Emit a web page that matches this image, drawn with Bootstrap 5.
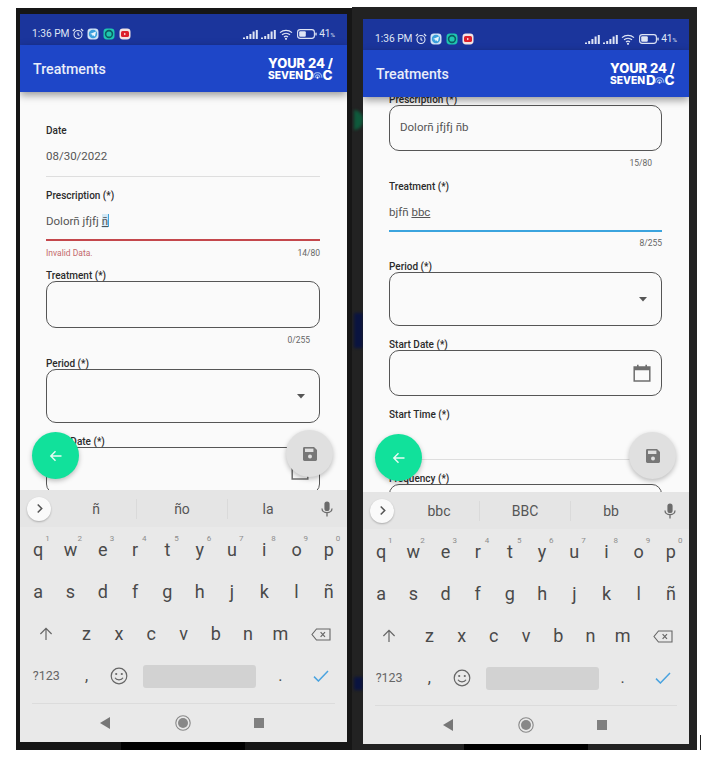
<!DOCTYPE html>
<html lang="en">
<head>
  <meta charset="UTF-8">
  <title>Treatments</title>
  <link href="https://cdn.jsdelivr.net/npm/bootstrap@5.3.3/dist/css/bootstrap.min.css" rel="stylesheet">
  <style>
    body { background: #fff; font-family: Roboto, "Liberation Sans", sans-serif; width: 707px; height: 758px; overflow: hidden; }
    .page-wrap { padding-left: 16px; }
    .frame-a { background: #161616; width: 336px; height: 742px; margin-top: 8px; padding: 6px 5px 8px 4px; }
    .frame-b { background: #222; width: 345px; height: 743px; margin-top: 7px; padding: 12px 8px 6px 11px; }
    .blob { position: absolute; left: 2px; width: 9px; filter: blur(1.5px); }
    .blob-green { top: 103px; height: 20px; background: #0f5a3c; border-radius: 0 10px 10px 0; }
    .blob-navy { top: 306px; height: 35px; background: #0a1440; }
    .blob-navy2 { top: 670px; height: 13px; background: #0a1440; }
    .notch { position: absolute; bottom: 0; height: 8px; width: 124px; background: #000; }
    .frame-a .notch { left: 105px; }
    .frame-b .notch { left: 112px; height: 6px; }
    .stray-line { position: absolute; left: 700px; top: 735px; width: 1px; height: 15px; background: #222; }
    .screen { height: 100%; background: #fafafa; overflow: hidden; }
    .status-row { height: 31px; background: #1b359c; color: #dfe5f5; font-size: 10.2px; padding: 9px 12px 0 12px; }
    .status-row svg { display: block; }
    .bar-row { height: 47px; background: #1e46c8; color: #e9edf9; padding: 2px 13px 0; box-shadow: 0 3px 8px rgba(0,0,0,.4); z-index: 2; }
    .bar-title { font-size: 14.2px; font-weight: 500; }
    .brand-logo { display: block; margin-right: 1px; }
    .brand-logo text { font-family: Inter, Roboto, sans-serif; font-weight: 800; fill: #fff; }
    .content { flex: 1 1 0; min-height: 0; overflow: hidden; padding: 32px 27px 0 26px; }
    .content-scrolled { padding-top: 0; }
    .content-scrolled > div { margin-top: -4px; }
    .fld-label { height: 12px; padding-top: 1px; font-size: 10px; line-height: 12px; font-weight: 500; color: #2b2b2b; }
    .fld-line { height: 41px; padding-top: 2px; font-size: 11.5px; color: #555; border-bottom: 1px solid #dedede; }
    .frame-b .fld-line { height: 40px; }
    .fld-line.is-error { height: 40px; padding-top: 3px; border-bottom: 2px solid #c4474c; }
    .fld-line.is-focus { padding-top: 3px; border-bottom: 2px solid #3ba4de; }
    .fld-box { height: 47px; border: 1px solid #555; border-radius: 10px; font-size: 11.5px; color: #555; padding: 0 10px; }
    .frame-b .fld-box { height: 46px; }
    .fld-box.is-tall, .frame-b .fld-box.is-tall { height: 54px; }
    .fld-help { height: 28px; padding-top: 6px; font-size: 8.5px; line-height: 12px; color: #666; }
    .frame-b .fld-help { padding-top: 5px; }
    .fld-help .err { color: #c4696c; }
    .fld-count { height: 29px; padding: 6px 10px 0 0; font-size: 8.5px; line-height: 12px; color: #666; text-align: right; }
    .gap-12 { height: 12px; }
    .caret-mark { display: inline-block; width: 1px; height: 13px; background: #3ba4de; vertical-align: -2px; }
    .under-sel { background: #d3e9f6; }
    .fab { position: absolute; width: 47px; height: 47px; border-radius: 50%; z-index: 3; }
    .fab-back { left: 12px; bottom: 11px; background: #11e19b; box-shadow: 0 2px 5px rgba(0,0,0,.25); }
    .fab-save { right: 14px; bottom: 13px; background: #e0e0e0; box-shadow: 0 2px 5px rgba(0,0,0,.25); }
    .frame-b .fab-save { right: 13px; }
    .kbd { background: #e9e9e9; color: #4a4a4a; flex: 0 0 auto; height: 252px; z-index: 2; position: relative; }
    .kbd-strip { height: 37px; background: #e5e5e5; font-size: 14px; color: #555; }
    .chev-btn { width: 24px; height: 24px; margin: 0 5px 0 7px; border-radius: 50%; background: #fafafa; box-shadow: 0 1px 2px rgba(0,0,0,.25); }
    .sug { width: 80px; height: 20px; line-height: 20px; text-align: center; }
    .sug-mid { width: 92px; border-left: 1px solid #dadada; border-right: 1px solid #dadada; }
    .mic-cell { width: 38px; }
    .kbd-keys { padding: 2px 2px 0; }
    .key-row { display: grid; grid-template-columns: repeat(20, 1fr); height: 42px; }
    .key-cell { grid-column: span 2; position: relative; font-size: 18px; line-height: 1; }
    .key-wide { grid-column: span 3; }
    .key-space { grid-column: span 8; padding: 0 8px; }
    .space-bar { width: 100%; height: 23px; background: #d2d2d2; border-radius: 3px; }
    .key-num { position: absolute; left: calc(50% + 7px); top: 6px; font-size: 8px; line-height: 8px; color: #8d8d8d; }
    .key-sym { font-size: 12.5px; color: #666; }
    .kbd-nav { height: 39px; margin: 6px 12px 0; border-top: 1px solid #dcdcdc; position: relative; }
    .nav-ico { position: absolute; }
    .nav-tri { left: 68px; top: 13px; }
    .nav-ring { left: 143px; top: 11px; }
    .nav-sq { left: 222px; top: 14px; }
    .sig-gap { margin-left: 3px; }
    .alarm-gap { margin-left: 2px; }
    .app-gap { margin-left: 3px; }
    .batt-gap { margin-left: 4px; }
    .pct-sign { font-size: 6px; }
    .pct-wrap { margin-left: 2px; }
  </style>
</head>
<body>
<svg width="0" height="0" class="position-absolute">
  <symbol id="ico-alarm" viewBox="0 0 12 12"><circle cx="6" cy="6.5" r="4" fill="none" stroke="#dfe5f5" stroke-width="1.1"/><path d="M6 4.4V6.6L7.4 7.4M.8 3 3 1M11.2 3 9 1" fill="none" stroke="#dfe5f5" stroke-width="1.1"/></symbol>
  <symbol id="ico-tele" viewBox="0 0 12 12"><rect x=".5" y=".5" width="11" height="11" rx="3.4" fill="#cfe3f5"/><circle cx="6" cy="6" r="4.2" fill="#3a9fdc"/><path d="M3 6 9 3.6 8 8.6 6 7.2 5.2 8V6.6Z" fill="#eaf5fc"/></symbol>
  <symbol id="ico-teal" viewBox="0 0 12 12"><rect x=".5" y=".5" width="11" height="11" rx="3.4" fill="#1fc7b0"/><circle cx="6" cy="6" r="3.4" fill="none" stroke="#0c5d63" stroke-width="1.6"/></symbol>
  <symbol id="ico-yt" viewBox="0 0 12 12"><rect x=".5" y=".5" width="11" height="11" rx="3.4" fill="#f2e4e4"/><rect x="2" y="3" width="8" height="6" rx="1.6" fill="#dc1f2a"/><path d="M5.2 4.8 7 6 5.2 7.2Z" fill="#fff"/></symbol>
  <symbol id="ico-sig" viewBox="0 0 15 9"><path d="M0 7.5h2V9H0ZM3.2 6h2v3h-2ZM6.4 4h2v5h-2ZM9.6 1.5h2V9h-2ZM12.8 0h2v9h-2Z" fill="#dfe5f5"/></symbol>
  <symbol id="ico-wifi" viewBox="0 0 14 11"><path d="M1 3.6C4.4.6 9.6.6 13 3.6M3 5.8C5.3 3.8 8.7 3.8 11 5.8M5 8C6.2 7 7.8 7 9 8" fill="none" stroke="#dfe5f5" stroke-width="1.2"/><circle cx="7" cy="9.8" r="1.1" fill="#dfe5f5"/></symbol>
  <symbol id="ico-batt" viewBox="0 0 20 10"><rect x=".6" y=".6" width="16.8" height="8.8" rx="2.6" fill="none" stroke="#dfe5f5" stroke-width="1.1"/><rect x="2.2" y="2.2" width="6.6" height="5.6" rx="1" fill="#dfe5f5"/><rect x="18.3" y="3.4" width="1.4" height="3.2" rx=".6" fill="#dfe5f5"/></symbol>
  <symbol id="ico-doc-o" viewBox="0 0 12 11"><path d="M1.2 8.5C1.2 1 10.8 1 10.8 8.5M3.4 8.5C3.4 4.2 8.6 4.2 8.6 8.5" fill="none" stroke="#8fb0ee" stroke-width="1.3"/><circle cx="6" cy="8.4" r="1.2" fill="#fff"/></symbol>
  <symbol id="ico-back" viewBox="0 0 16 16"><path d="M13.5 8H3M7.5 3.2 2.8 8l4.7 4.8" fill="none" stroke="#e9fbf4" stroke-width="1.4"/></symbol>
  <symbol id="ico-save" viewBox="0 0 16 16"><path d="M1 2.4C1 1.6 1.6 1 2.4 1H12L15 4V13.6C15 14.4 14.4 15 13.6 15H2.4C1.6 15 1 14.4 1 13.6Z" fill="#777"/><rect x="3" y="2.6" width="8.4" height="3.4" fill="#e0e0e0"/><circle cx="8" cy="10.6" r="2" fill="#e0e0e0"/></symbol>
  <symbol id="ico-cal" viewBox="0 0 18 18"><path d="M1.2 3H16.8V17H1.2Z" fill="none" stroke="#6e6e6e" stroke-width="1.5"/><path d="M1 3H17V6.2H1ZM4 .8H5.6V3H4ZM12.4 .8H14V3H12.4Z" fill="#6e6e6e"/></symbol>
  <symbol id="ico-caret" viewBox="0 0 8 5"><path d="M0 0H8L4 4.6Z" fill="#555"/></symbol>
  <symbol id="ico-chev" viewBox="0 0 10 10"><path d="M3.4 1.4 7 5 3.4 8.6" fill="none" stroke="#555" stroke-width="1.4"/></symbol>
  <symbol id="ico-mic" viewBox="0 0 12 16"><rect x="3.4" y=".5" width="5.2" height="9.6" rx="2.6" fill="#6b6b6b"/><path d="M1 7.4C1 13 11 13 11 7.4M6 11.8V15.5" fill="none" stroke="#6b6b6b" stroke-width="1.3"/></symbol>
  <symbol id="ico-shift" viewBox="0 0 14 14"><path d="M7 13V1.6M1.4 7 7 1.4 12.6 7" fill="none" stroke="#666" stroke-width="1.2"/></symbol>
  <symbol id="ico-del" viewBox="0 0 20 13"><path d="M5.5 1H19V12H5.5L1 6.5Z" fill="none" stroke="#666" stroke-width="1.1"/><path d="M9.6 4.2 14 8.8M14 4.2 9.6 8.8" stroke="#666" stroke-width="1.2"/></symbol>
  <symbol id="ico-emoji" viewBox="0 0 18 18"><circle cx="9" cy="9" r="7.8" fill="none" stroke="#666" stroke-width="1.2"/><circle cx="6.2" cy="7" r="1.1" fill="#666"/><circle cx="11.8" cy="7" r="1.1" fill="#666"/><path d="M5 10.8C6.4 13.6 11.6 13.6 13 10.8" fill="none" stroke="#666" stroke-width="1.2"/></symbol>
  <symbol id="ico-check" viewBox="0 0 16 12"><path d="M1 6.6 5.4 11 15 1" fill="none" stroke="#4aa3df" stroke-width="1.5"/></symbol>
  <symbol id="ico-tri" viewBox="0 0 10 12"><path d="M10 0V12L0 6Z" fill="#777"/></symbol>
  <symbol id="ico-ring" viewBox="0 0 16 16"><circle cx="8" cy="8" r="7.2" fill="none" stroke="#888" stroke-width="1.1"/><circle cx="8" cy="8" r="5" fill="#888"/></symbol>
  <symbol id="ico-sq" viewBox="0 0 10 10"><rect width="10" height="10" fill="#808080"/></symbol>
</svg>

<template id="chrome-top">
  <div class="status-row d-flex align-items-center flex-shrink-0">
    <span>1:36 PM</span>
    <svg class="alarm-gap" width="12" height="12"><use href="#ico-alarm"/></svg>
    <svg class="app-gap" width="12" height="12"><use href="#ico-tele"/></svg>
    <svg class="batt-gap" width="12" height="12"><use href="#ico-teal"/></svg>
    <svg class="batt-gap" width="12" height="12"><use href="#ico-yt"/></svg>
    <svg class="ms-auto" width="15" height="9"><use href="#ico-sig"/></svg>
    <svg class="sig-gap" width="15" height="9"><use href="#ico-sig"/></svg>
    <svg class="sig-gap" width="14" height="11"><use href="#ico-wifi"/></svg>
    <svg class="batt-gap" width="20" height="10"><use href="#ico-batt"/></svg>
    <span class="pct-wrap">41<span class="pct-sign">%</span></span>
  </div>
  <div class="bar-row d-flex align-items-center justify-content-between flex-shrink-0 position-relative">
    <span class="bar-title">Treatments</span>
    <svg class="brand-logo" width="65" height="25" viewBox="0 0 65 25">
      <text x="0" y="10.5" font-size="12.6" textLength="65" lengthAdjust="spacingAndGlyphs">YOUR 24 /</text>
      <text x="0" y="22" font-size="10" textLength="35" lengthAdjust="spacingAndGlyphs">SEVEN</text>
      <text x="36" y="23" font-size="13.5">D</text>
      <use href="#ico-doc-o" x="44" y="13" width="11" height="10"/>
      <text x="54.5" y="23" font-size="13.5">C</text>
    </svg>
  </div>
</template>

<template id="chrome-kbd">
  <div class="kbd d-flex flex-column">
    <div class="kbd-strip d-flex align-items-center flex-shrink-0">
      <span class="chev-btn d-flex align-items-center justify-content-center"><svg width="11" height="11"><use href="#ico-chev"/></svg></span>
      <span class="sug sug-1"></span>
      <span class="sug sug-mid sug-2"></span>
      <span class="sug sug-3"></span>
      <span class="mic-cell d-flex justify-content-center"><svg width="12" height="16"><use href="#ico-mic"/></svg></span>
    </div>
    <div class="kbd-keys">
      <div class="key-row row-1"></div>
      <div class="key-row row-2"></div>
      <div class="key-row row-3">
        <span class="key-cell key-wide d-flex align-items-center justify-content-center"><svg width="14" height="14"><use href="#ico-shift"/></svg></span>
        <span class="key-cell key-wide d-flex align-items-center justify-content-center"><svg width="20" height="13"><use href="#ico-del"/></svg></span>
      </div>
      <div class="key-row">
        <span class="key-cell key-wide key-sym d-flex align-items-center justify-content-center">?123</span>
        <span class="key-cell d-flex align-items-center justify-content-center fs-6">,</span>
        <span class="key-cell d-flex align-items-center justify-content-center"><svg width="18" height="18"><use href="#ico-emoji"/></svg></span>
        <span class="key-cell key-space d-flex align-items-center justify-content-center"><span class="space-bar"></span></span>
        <span class="key-cell d-flex align-items-center justify-content-center fs-6">.</span>
        <span class="key-cell key-wide d-flex align-items-center justify-content-center"><svg width="16" height="12"><use href="#ico-check"/></svg></span>
      </div>
    </div>
    <div class="kbd-nav">
      <svg class="nav-ico nav-tri" width="10" height="12"><use href="#ico-tri"/></svg>
      <svg class="nav-ico nav-ring" width="16" height="16"><use href="#ico-ring"/></svg>
      <svg class="nav-ico nav-sq" width="10" height="10"><use href="#ico-sq"/></svg>
    </div>
  </div>
</template>

<div class="page-wrap d-flex">
  <div class="frame-a position-relative">
    <div class="screen d-flex flex-column position-relative" data-sug="ñ,ño,la">
      <div class="content position-relative">
        <div class="fld-label">Date</div>
        <div class="fld-line d-flex align-items-center">08/30/2022</div>
        <div class="gap-12"></div>
        <div class="fld-label">Prescription (*)</div>
        <div class="fld-line is-error d-flex align-items-center"><span>Dolorñ jfjfj <u class="under-sel">ñ</u><span class="caret-mark"></span></span></div>
        <div class="fld-help d-flex justify-content-between"><span class="err">Invalid Data.</span><span>14/80</span></div>
        <div class="fld-label">Treatment (*)</div>
        <div class="fld-box"></div>
        <div class="fld-count">0/255</div>
        <div class="fld-label">Period (*)</div>
        <div class="fld-box is-tall d-flex align-items-center justify-content-end"><svg class="me-1" width="8" height="5"><use href="#ico-caret"/></svg></div>
        <div class="gap-12"></div>
        <div class="fld-label">Start Date (*)</div>
        <div class="fld-box d-flex align-items-center justify-content-end"><svg width="18" height="18"><use href="#ico-cal"/></svg></div>
        <div class="fab fab-back position-absolute d-flex align-items-center justify-content-center"><svg width="16" height="16"><use href="#ico-back"/></svg></div>
        <div class="fab fab-save position-absolute d-flex align-items-center justify-content-center"><svg width="16" height="16"><use href="#ico-save"/></svg></div>
      </div>
    </div>
    <div class="notch"></div>
  </div>

  <div class="frame-b position-relative">
    <div class="blob blob-green"></div>
    <div class="blob blob-navy"></div>
    <div class="blob blob-navy2"></div>
    <div class="screen d-flex flex-column position-relative" data-sug="bbc,BBC,bb">
      <div class="content content-scrolled position-relative">
        <div>
          <div class="fld-label">Prescription (*)</div>
          <div class="fld-box d-flex align-items-center">Dolorñ jfjfj ñb</div>
          <div class="fld-count">15/80</div>
          <div class="fld-label">Treatment (*)</div>
          <div class="fld-line is-focus d-flex align-items-center"><span>bjfñ <u>bbc</u></span></div>
          <div class="fld-help text-end">8/255</div>
          <div class="fld-label">Period (*)</div>
          <div class="fld-box is-tall d-flex align-items-center justify-content-end"><svg class="me-1" width="8" height="5"><use href="#ico-caret"/></svg></div>
          <div class="gap-12"></div>
          <div class="fld-label">Start Date (*)</div>
          <div class="fld-box d-flex align-items-center justify-content-end"><svg width="18" height="18"><use href="#ico-cal"/></svg></div>
          <div class="gap-12"></div>
          <div class="fld-label">Start Time (*)</div>
          <div class="fld-line"></div>
          <div class="gap-12"></div>
          <div class="fld-label">Frequency (*)</div>
          <div class="fld-box"></div>
        </div>
        <div class="fab fab-back position-absolute d-flex align-items-center justify-content-center"><svg width="16" height="16"><use href="#ico-back"/></svg></div>
        <div class="fab fab-save position-absolute d-flex align-items-center justify-content-center"><svg width="16" height="16"><use href="#ico-save"/></svg></div>
      </div>
    </div>
    <div class="notch"></div>
  </div>
</div>
<div class="stray-line"></div>

<script src="https://cdn.jsdelivr.net/npm/bootstrap@5.3.3/dist/js/bootstrap.bundle.min.js"></script>
<script>
function keyHtml(ch, num) {
  let sup = num !== undefined ? '<span class="key-num">' + num + '</span>' : '';
  return '<span class="key-cell d-flex align-items-center justify-content-center">' + ch + sup + '</span>';
}

document.querySelectorAll('.screen').forEach(screen => {
  let top = document.getElementById('chrome-top').content.cloneNode(true);
  let kbd = document.getElementById('chrome-kbd').content.cloneNode(true);
  let sug = screen.dataset.sug.split(',');
  kbd.querySelector('.sug-1').textContent = sug[0];
  kbd.querySelector('.sug-2').textContent = sug[1];
  kbd.querySelector('.sug-3').textContent = sug[2];
  kbd.querySelector('.row-1').innerHTML = [...'qwertyuiop'].map((c, i) => keyHtml(c, (i + 1) % 10)).join('');
  kbd.querySelector('.row-2').innerHTML = [...'asdfghjklñ'].map(c => keyHtml(c)).join('');
  // letters go between the shift and delete keys
  kbd.querySelector('.row-3 .key-cell').insertAdjacentHTML('afterend', [...'zxcvbnm'].map(c => keyHtml(c)).join(''));
  screen.prepend(top);
  screen.append(kbd);
});
</script>
</body>
</html>
